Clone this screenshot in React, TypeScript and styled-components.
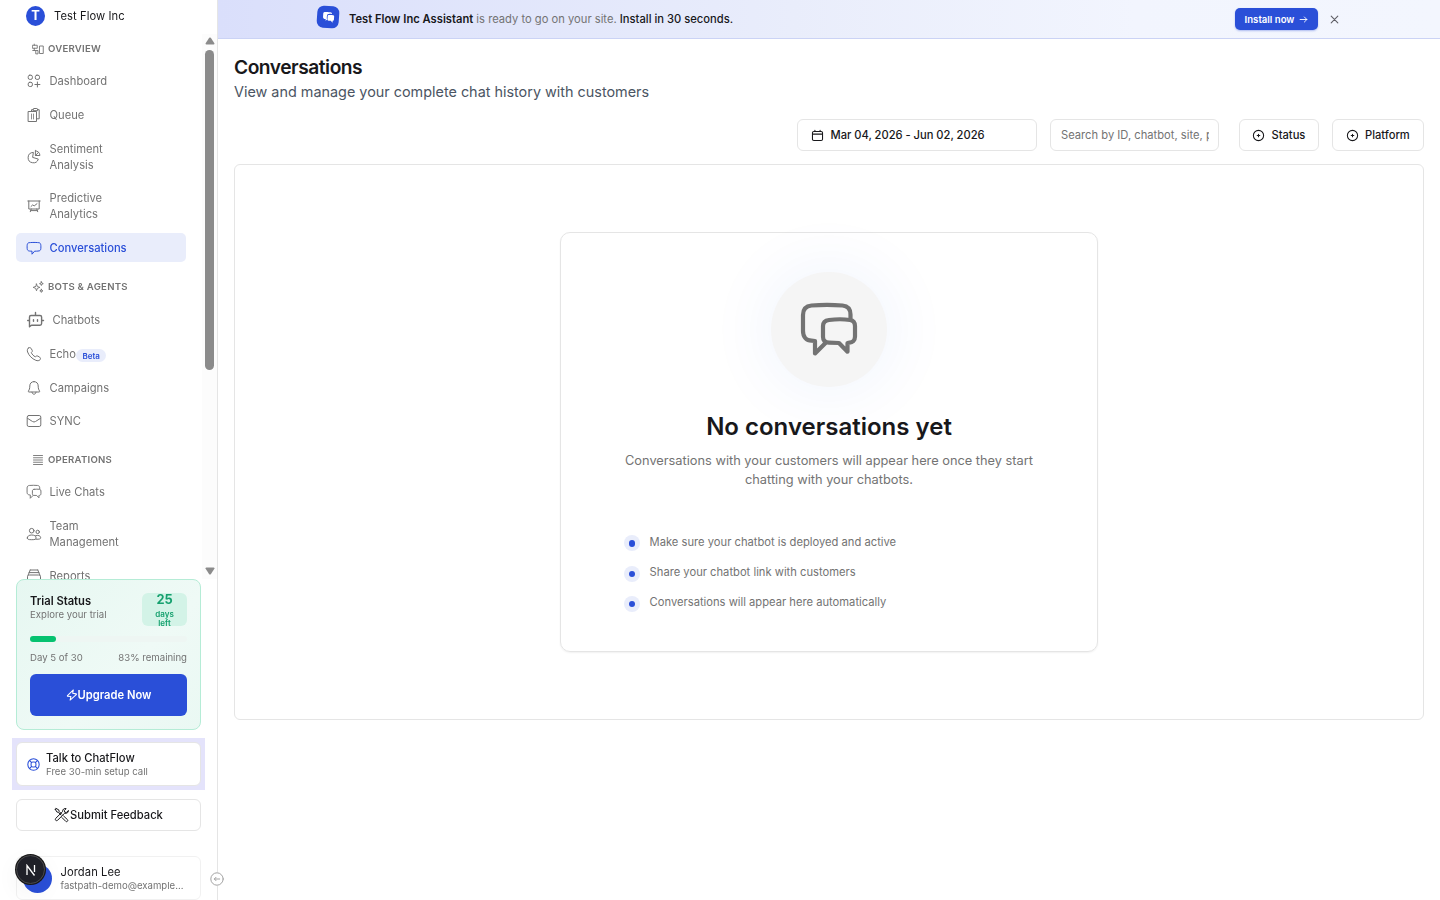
import React from "react";
import styled, { createGlobalStyle } from "styled-components";

const GlobalStyle = createGlobalStyle`
  *, *::before, *::after { box-sizing: border-box; }
  html, body { margin: 0; padding: 0; height: 100%; overflow: hidden; }
  body { background: #fff; color: #18181b; font-family: Inter, "Liberation Sans", sans-serif; font-size: 11.2px; }
  button, input { font-family: inherit; margin: 0; }
  svg { display: block; flex: none; }
`;

const Page = styled.div`
  display: flex;
  width: 1440px;
  height: 900px;
  overflow: hidden;
`;

const Sidebar = styled.aside`
  position: relative;
  display: flex;
  flex-direction: column;
  flex: none;
  width: 218px;
  height: 900px;
  border-right: 1px solid #e5e5e5;
  background: #fff;
  will-change: transform;
`;

const Brand = styled.div`
  display: flex;
  align-items: center;
  flex: none;
  gap: 9px;
  height: 34px;
  padding: 0 0 2px 26px;
  font-size: 11.2px;
  font-weight: 400;
  letter-spacing: 0.08px;
  color: #18181b;
`;

const BrandMark = styled.span`
  display: grid;
  place-items: center;
  width: 19px;
  height: 20px;
  border-radius: 50%;
  background: #2a4fd8;
  color: #fff;
  font-size: 12.8px;
  font-weight: 700;
  line-height: 18px;
`;

const NavRegion = styled.div`
  display: flex;
  flex: none;
  height: 545px;
  overflow: hidden;
`;

const Nav = styled.nav`
  flex: 1;
  padding: 5px 16px 0;
`;

const Group = styled.div<{ $top?: number }>`
  display: flex;
  align-items: center;
  height: 19.2px;
  margin-top: ${(p) => p.$top ?? 0}px;
  margin-bottom: 8.800px;
  padding-left: 16px;
  gap: 4px;
  font-size: 9.6px;
  font-weight: 600;
  letter-spacing: 0.24px;
  color: #737373;
`;

const Item = styled.a<{ $active?: boolean }>`
  display: flex;
  align-items: center;
  width: 170px;
  margin-bottom: 4.8px;
  padding: 6.4px 10px;
  gap: 7.5px;
  border-radius: 5px;
  background: ${(p) => (p.$active ? "#e9edfb" : "transparent")};
  color: ${(p) => (p.$active ? "#2a4fd8" : "#737373")};
  font-size: 11.2px;
  font-weight: ${(p) => (p.$active ? 500 : 400)};
  line-height: 16px;
`;

const ItemText = styled.span<{ $wrap?: boolean }>`
  width: ${(p) => (p.$wrap ? "80px" : "auto")};
`;

const Beta = styled.span`
  height: 13px;
  margin: 3px 0 0 -7px;
  padding: 0 6px;
  border-radius: 7px;
  background: #e9edfb;
  color: #2a4fd8;
  font-size: 8px;
  font-weight: 600;
  line-height: 14px;
`;

const ScrollTrack = styled.div`
  display: flex;
  flex-direction: column;
  align-items: center;
  width: 15px;
  padding: 3px 0 4px;
  background: #fcfcfc;
`;

const Thumb = styled.div`
  width: 9px;
  height: 320px;
  margin: 5px 0 auto;
  border-radius: 5px;
  background: #8b8b8b;
`;

const TrialCard = styled.section`
  flex: none;
  width: 185px;
  height: 151px;
  margin-left: 16px;
  padding: 12px 13px;
  border: 1px solid #b5ecd6;
  border-radius: 8px;
  background: linear-gradient(135deg, #e6f7f1, #effaf6 60%, #eaf8f3);
`;

const Between = styled.div`
  display: flex;
  justify-content: space-between;
  color: #737373;
  font-size: 9.6px;
  line-height: 12px;
`;

const TrialTitle = styled.div`
  padding-top: 2px;
  color: #18181b;
  font-size: 11.2px;
  font-weight: 600;
  line-height: 15px;
`;

const DaysLeft = styled.div`
  width: 45px;
  height: 33px;
  margin-top: 1px;
  border-radius: 6px;
  background: #d3f3e7;
  color: #15a06e;
  font-size: 8px;
  font-weight: 600;
  line-height: 9.6px;
  text-align: center;
  strong { display: block; margin-bottom: 2.500px; font-size: 12.8px; font-weight: 700; line-height: 14px; }
`;

const Progress = styled.div`
  height: 6px;
  margin: 10px 0 10px;
  border-radius: 3px;
  background: #eef6f3;
`;

const ProgressFill = styled.div`
  width: 26px;
  height: 6px;
  border-radius: 3px;
  background: #06c270;
`;

const Upgrade = styled.button`
  display: flex;
  align-items: center;
  justify-content: center;
  width: 157px;
  height: 42px;
  margin-top: 10px;
  padding: 0;
  border: 0;
  border-radius: 6px;
  background: #2a4fd8;
  color: #fff;
  font-size: 11.2px;
  font-weight: 600;
`;

const TalkCard = styled.a`
  display: flex;
  align-items: center;
  flex: none;
  width: 193px;
  height: 52px;
  margin: 8px 0 9px 12px;
  padding: 4px;
  background: #e4e3fb;
`;

const TalkInner = styled.div`
  display: flex;
  align-items: center;
  width: 185px;
  height: 44px;
  padding-left: 10px;
  gap: 6px;
  border: 1px solid #e5e5e5;
  border-radius: 6px;
  background: #fff;
`;

const TwoLines = styled.div<{ $light?: boolean }>`
  color: #18181b;
  font-size: 11.2px;
  font-weight: ${(p) => (p.$light ? 400 : 500)};
  letter-spacing: ${(p) => (p.$light ? "0.08px" : "0")};
  line-height: 14px;
  small { display: block; color: #737373; font-size: 9.6px; font-weight: 400; letter-spacing: 0; line-height: 13px; }
`;

const Feedback = styled.button`
  display: flex;
  align-items: center;
  justify-content: center;
  flex: none;
  width: 185px;
  height: 32px;
  margin: 0 0 25px 16px;
  padding: 0;
  border: 1px solid #e5e5e5;
  border-radius: 6px;
  background: #fff;
  color: #18181b;
  font-size: 11.2px;
  font-weight: 500;
`;

const UserCard = styled.div`
  display: flex;
  align-items: center;
  flex: none;
  width: 185px;
  height: 44px;
  margin-left: 16px;
  padding-left: 6px;
  gap: 8.500px;
  border: 1px solid #f1f1f1;
  border-radius: 6px;
`;

const Avatar = styled.span`
  width: 29px;
  height: 29px;
  border-radius: 50%;
  background: #2a4fd8;
`;

const DevBadge = styled.div`
  position: absolute;
  left: 16px;
  top: 855px;
  display: grid;
  place-items: center;
  width: 29px;
  height: 29px;
  border: 1px solid #4b4b4d;
  border-radius: 50%;
  background: #1f2028;
  box-shadow: 0 0 0 1px #171717, 0 8px 24px rgba(0, 0, 0, 0.06);
`;

const Collapse = styled.div`
  position: absolute;
  left: 210px;
  top: 872px;
  width: 14px;
  height: 14px;
  border-radius: 50%;
  background: #fff;
`;

const Main = styled.main`
  display: flex;
  flex-direction: column;
  flex: 1;
  min-width: 0;
`;

const Banner = styled.div`
  display: flex;
  align-items: center;
  height: 39px;
  padding: 0 101px 0 98.500px;
  border-bottom: 1px solid #cbd3f5;
  background: linear-gradient(90deg, #dadffb 0%, #e9edfb 47%, #f2f5fe 75%, #f3f6fe 100%);
`;

const BannerLogo = styled.span`
  display: grid;
  place-items: center;
  width: 22.400px;
  height: 22.400px;
  margin: -4px 10px 0 0;
  border-radius: 6.500px;
  background: #2a4fd8;
  transform: rotate(4deg);
`;

const BannerText = styled.p`
  flex: 1;
  margin: 0;
  color: #737373;
  font-size: 11.2px;
  line-height: 16px;
  b { color: #18181b; font-weight: 600; }
  em { color: #18181b; font-style: normal; font-weight: 500; }
`;

const Install = styled.button`
  display: flex;
  align-items: center;
  justify-content: center;
  width: 83px;
  height: 22px;
  margin-right: 12px;
  padding: 0;
  gap: 5px;
  border: 0;
  border-radius: 5px;
  background: #2a4fd8;
  box-shadow: 0 1px 2px rgba(42, 79, 216, 0.35);
  color: #fff;
  font-size: 9.6px;
  font-weight: 600;
`;

const Content = styled.div`
  padding: 16px 16px 0;
`;

const Title = styled.h1`
  margin: 0;
  color: #18181b;
  font-size: 19.2px;
  font-weight: 600;
  letter-spacing: -0.48px;
  line-height: 25px;
`;

const Subtitle = styled.p`
  margin: 0;
  color: #4b5563;
  font-size: 14.4px;
  line-height: 24px;
`;

const Filters = styled.div`
  display: flex;
  justify-content: flex-end;
  margin: 15px 0 13px;
  gap: 13px;
`;

const FilterButton = styled.button<{ $width: number; $pad?: number }>`
  display: flex;
  align-items: center;
  width: ${(p) => p.$width}px;
  height: 32px;
  padding: 0 0 0 ${(p) => p.$pad ?? 12}px;
  gap: 6.500px;
  border: 1px solid #e5e5e5;
  border-radius: 6px;
  background: #fff;
  color: #18181b;
  font-size: 11.2px;
  font-weight: 500;
  letter-spacing: -0.03px;
`;

const Search = styled.input`
  width: 169px;
  height: 32px;
  margin-right: 7px;
  padding: 0 9px 0 10px;
  border: 1px solid #e5e5e5;
  border-radius: 6px;
  font-size: 11.2px;
  outline: none;
  &::placeholder { color: #737373; opacity: 1; }
`;

const Panel = styled.section`
  display: flex;
  justify-content: center;
  height: 556px;
  padding-top: 67px;
  border: 1px solid #e5e5e5;
  border-radius: 6px;
`;

const EmptyCard = styled.div`
  display: flex;
  flex-direction: column;
  align-items: center;
  width: 538px;
  height: 420px;
  padding-top: 39px;
  border: 1px solid #e5e5e5;
  border-radius: 10px;
  box-shadow: 0 1px 2px rgba(0, 0, 0, 0.06);
`;

const IconDisc = styled.div`
  display: grid;
  place-items: center;
  width: 115.2px;
  height: 115.2px;
  border-radius: 50%;
  background: #f5f5f5;
  color: #737373;
  box-shadow: 0 0 64px 8px rgba(42, 79, 216, 0.06);
`;

const EmptyTitle = styled.h2`
  margin: 24px 0 0;
  color: #18181b;
  font-size: 24px;
  font-weight: 600;
  line-height: 32px;
`;

const EmptyText = styled.p`
  width: 420px;
  margin: 8px 0 0;
  color: #737373;
  font-size: 12.8px;
  line-height: 19.2px;
  text-align: center;
`;

const Steps = styled.ul`
  width: 410px;
  margin: 42px 0 0;
  padding: 0;
  list-style: none;
`;

const Step = styled.li`
  display: flex;
  height: 30.4px;
  gap: 9.6px;
  color: #737373;
  font-size: 11.2px;
  line-height: 20.600px;
`;

const Dot = styled.span`
  display: grid;
  place-items: center;
  width: 16px;
  height: 16px;
  margin-top: 3.800px;
  border-radius: 50%;
  background: #e9edfb;
  &::after { content: ""; width: 6.4px; height: 6.4px; border-radius: 50%; background: #2a4fd8; }
`;

type IconProps = { size?: number; w?: number; children: React.ReactNode };
const Icon = ({ size = 16, w = 1, children }: IconProps) => (
  <svg width={size} height={size} viewBox="0 0 16 16" fill="none" stroke="currentColor" strokeWidth={w} strokeLinecap="round" strokeLinejoin="round">
    {children}
  </svg>
);

const icons = {
  overview: (
    <Icon size={12} w={1.2}>
      <path d="M1 3h6v4H1zM3 3V1.5M1 10h4v4.5h3V10H5M3 7v3M10.5 4h4.500v10h-4.500z" />
    </Icon>
  ),
  dashboard: (
    <Icon>
      <rect x="2.200" y="2.200" width="4.200" height="4.200" rx="1.600" />
      <rect x="9.300" y="2.200" width="4.200" height="4.200" rx="1.600" />
      <rect x="2.200" y="9.300" width="4.200" height="4.200" rx="1.600" />
      <path d="M11.400 9v5M8.900 11.500h5" />
    </Icon>
  ),
  queue: (
    <Icon>
      <path d="M5.500 4V2.700h1.600M11.500 2.700h1.700v9.100h-2.700M7.200 3.300V2.100c0-.4.300-.6.600-.6h3c.4 0 .7.200.7.600v1.200zM2.500 4.500h8v10h-8z" />
      <path d="M5.500 7v5M7.500 7v5" strokeWidth=".8" />
    </Icon>
  ),
  pie: (
    <Icon>
      <path d="M7 3.400a5.200 5.200 0 1 0 5.300 6.700L7 8.500zM9.400 1.800V6.500h4.500a4.600 4.600 0 0 0-4.500-4.700zM9.400 6.500l3-3" />
    </Icon>
  ),
  board: (
    <Icon>
      <path d="M1.800 3h12.400M2.800 3v8h10.400V3M5 8.500l1.700-1.600 1.500 1L11 5.700M5.200 11l-.9 2.700M10.800 11l.9 2.700M4.800 12.600h6.400" />
    </Icon>
  ),
  chat: (
    <Icon>
      <path d="M6 13.800v-2.600c-1.800 0-3.200-.2-3.900-.6-.8-.5-1-1.500-1-3.700s.2-3.400 1.200-4c1.200-.6 10.200-.6 11.400 0 1 .6 1.200 1.800 1.200 4s-.2 3.200-1 3.700c-.8.4-2.600.6-4.900.6z" />
    </Icon>
  ),
  sparkles: (
    <Icon size={12} w={1.2}>
      <path d="M6 4l1.200 3.300L10.500 8.500 7.200 9.700 6 13 4.800 9.700 1.500 8.500l3.300-1.200zM12.500 1l.7 1.800 1.800.7-1.800.7-.7 1.800-.7-1.800-1.800-.7 1.800-.7zM12.500 11l.6 1.500 1.500.6-1.500.6-.6 1.500-.6-1.500-1.500-.6 1.500-.6z" />
    </Icon>
  ),
  bot: (
    <svg width="19" height="17" viewBox="0 0 19 17" fill="none" stroke="currentColor" strokeWidth="1.400" strokeLinecap="round" strokeLinejoin="round">
      <path d="M9.500 4.500V1.500M5 4.500h9c1 0 1.600.6 1.600 1.600v6.500c0 1-.6 1.600-1.600 1.600H5.500l-2 1.600V6.100c0-1 .5-1.600 1.500-1.600zM1.700 9.500h1.800M15.600 9.500h1.900M7.500 8.700v1.600M11.500 8.700v1.600" />
    </svg>
  ),
  phone: (
    <Icon>
      <path d="M2.300 2.100c.8-.7 2-.8 2.600.1l1.200 1.900c.4.700.3 1.500-.3 2l-.5.500c.7 1.700 2.200 3.400 4 4.200l.6-.5c.6-.5 1.300-.6 2-.2l1.900 1.200c.9.600.9 1.700.2 2.500-.9 1-2.500 1.200-4.200.5C5.900 12.700 2.900 9.500 1.600 6c-.6-1.600-.3-3.100.7-3.900z" />
    </Icon>
  ),
  bell: (
    <Icon>
      <path d="M8 1.600c-2.600 0-4.200 1.800-4.200 4.400 0 2.800-.6 3.800-1.400 5-.3.500-.1 1 .5 1h10.200c.6 0 .8-.5.500-1-.8-1.200-1.400-2.200-1.400-5 0-2.600-1.600-4.400-4.200-4.400zM6 12.200c.2 1.300 1 2 2 2s1.800-.7 2-2" />
    </Icon>
  ),
  mail: (
    <Icon>
      <rect x="1.200" y="2.500" width="13.600" height="11" rx="1.600" />
      <path d="M1.500 5.300L6.500 8.500q1.500 1 3 0l5-3.200" />
    </Icon>
  ),
  lines: (
    <Icon size={12} w={1.200}>
      <path d="M2 2h12M2 5h12M2 8h12M2 11h12M2 14h12" />
    </Icon>
  ),
  people: (
    <Icon>
      <circle cx="5.700" cy="4.700" r="2.300" />
      <circle cx="11.700" cy="5.900" r="1.700" />
      <path d="M1.300 12c0-2 1.800-3 4.400-3s4.400 1 4.400 3c0 1.300-1 1.700-4.400 1.700S1.300 13.300 1.300 12zM9.500 9.700c2.800-1 5.200.2 5.200 2 0 1.200-1.200 1.700-4.600 1.500" />
    </Icon>
  ),
  reports: (
    <Icon>
      <path d="M4.200 2h7.600M3.200 4.600h9.600M1.500 14V8.800C1.500 7.500 2.200 7 3.300 7h9.400c1.100 0 1.800.5 1.800 1.800V14zM4.200 2l-1 2.600M11.800 2l1 2.600M3.200 4.600L2 7.300M12.800 4.600L14 7.300" />
    </Icon>
  ),
  bolt: (
    <Icon size={12} w={1.400}>
      <path d="M9.800 1.300L2 8.800c-.3.400-.2.800.3.800l4.200.5-1 4.600 8.200-7.300c.4-.4.200-.8-.2-.9l-4.600-.8z" />
    </Icon>
  ),
  tools: (
    <Icon w={1}>
      <path d="M2 1.500l2.700 1.300.5 1.700 2.600 2.600M9.600 9l3.900 3.700c1 1-.7 2.700-1.700 1.700L8 10.600M1.300 2.300l1.500 2.600 1.500.5L7 8M14.300 3.900l-2 1.600-1.600-.3-.3-1.600 1.700-2c-1.700-.6-3.700.7-3.500 3l-6.900 6.800c-1.200 1.300.6 3.100 1.900 1.900l6.900-7c2.300.3 4.400-.8 3.800-2.400zM1.300 2.300l.7-.8" />
    </Icon>
  ),
};

const ChatsIcon = ({ size, width }: { size: number; width: number }) => (
  <svg width={size} height={size} viewBox="0 0 60 60" fill="none" stroke="currentColor" strokeWidth={width} strokeLinecap="round" strokeLinejoin="round">
    <path d="M51.500 18.500v-4c0-5.500-3-8.500-8-9-10-.9-21-.9-31 0-5.500.5-8.500 4-8.500 9.500v16c0 6 3.500 9.500 8.500 9.700l3.500.3v12.500L26.500 43" />
    <path d="M30 20c7-.9 15-.9 21 0 3.500.5 5 3 5 6v10.500c0 4-2.500 6-5.500 6.200l-2 .3v8.700L40 43l-10-.3c-4-.2-6-2-6-6V26c0-3.500 2-5.500 6-6z" />
  </svg>
);

const PlusCircle = () => (
  <Icon size={13} w={1.300}>
    <circle cx="8" cy="8" r="6.300" />
    <path d="M8 6.400v3.200M6.400 8h3.200" />
  </Icon>
);

const Arrow = ({ down }: { down?: boolean }) => (
  <svg width="10" height="8" viewBox="0 0 10 8" fill="#8b8b8b">
    <path d={down ? "M.5 1.500Q.5 .5 1.500.5h7q1 0 1 1L5.800 7.200q-.8.800-1.600 0z" : "M.5 6.500q0 1 1 1h7q1 0 1-1L5.800.8Q5 0 4.200.8z"} />
  </svg>
);

export default function App() {
  return (
    <>
      <GlobalStyle />
      <Page>
        <Sidebar>
          <Brand>
            <BrandMark>T</BrandMark>
            Test Flow Inc
          </Brand>
          <NavRegion>
            <Nav>
              <Group>{icons.overview}OVERVIEW</Group>
              <Item>{icons.dashboard}<ItemText>Dashboard</ItemText></Item>
              <Item>{icons.queue}<ItemText>Queue</ItemText></Item>
              <Item>{icons.pie}<ItemText $wrap>Sentiment Analysis</ItemText></Item>
              <Item>{icons.board}<ItemText $wrap>Predictive Analytics</ItemText></Item>
              <Item $active>{icons.chat}<ItemText>Conversations</ItemText></Item>
              <Group $top={15}>{icons.sparkles}BOTS &amp; AGENTS</Group>
              <Item>{icons.bot}<ItemText>Chatbots</ItemText></Item>
              <Item>{icons.phone}<ItemText>Echo</ItemText><Beta>Beta</Beta></Item>
              <Item>{icons.bell}<ItemText>Campaigns</ItemText></Item>
              <Item>{icons.mail}<ItemText>SYNC</ItemText></Item>
              <Group $top={14.4}>{icons.lines}OPERATIONS</Group>
              <Item><ChatsIcon size={16} width={3.600} /><ItemText>Live Chats</ItemText></Item>
              <Item>{icons.people}<ItemText $wrap>Team Management</ItemText></Item>
              <Item>{icons.reports}<ItemText>Reports</ItemText></Item>
            </Nav>
            <ScrollTrack>
              <Arrow />
              <Thumb />
              <Arrow down />
            </ScrollTrack>
          </NavRegion>

          <TrialCard>
            <Between>
              <div>
                <TrialTitle>Trial Status</TrialTitle>
                Explore your trial
              </div>
              <DaysLeft><strong>25</strong>days<br />left</DaysLeft>
            </Between>
            <Progress><ProgressFill /></Progress>
            <Between><span>Day 5 of 30</span><span>83% remaining</span></Between>
            <Upgrade>{icons.bolt}Upgrade Now</Upgrade>
          </TrialCard>

          <TalkCard>
            <TalkInner>
              <svg width="13" height="13" viewBox="0 0 16 16" fill="none" stroke="#2a4fd8" strokeWidth="1.300">
                <circle cx="8" cy="8" r="7" />
                <rect x="5" y="5" width="6" height="6" rx="2.200" />
                <path d="M3 3l3 3M13 3l-3 3M3 13l3-3M13 13l-3-3" />
              </svg>
              <TwoLines>Talk to ChatFlow<small>Free 30-min setup call</small></TwoLines>
            </TalkInner>
          </TalkCard>
          <Feedback>{icons.tools}Submit Feedback</Feedback>
          <UserCard>
            <Avatar />
            <TwoLines $light>Jordan Lee<small>fastpath-demo@example...</small></TwoLines>
          </UserCard>
          <DevBadge>
            <svg width="12" height="12" viewBox="0 0 12 12" fill="none" stroke="#fff" strokeWidth="1.300">
              <path d="M2 11V1.500L9.500 11.500M9.500 1v7" />
            </svg>
          </DevBadge>
          <Collapse>
            <svg width="14" height="14" viewBox="0 0 14 14" fill="none" stroke="#a3a3a3" strokeLinecap="round">
              <circle cx="7" cy="7" r="6.200" />
              <path d="M4.300 7h5.400M6 5.300L4.300 7 6 8.700" />
            </svg>
          </Collapse>
        </Sidebar>

        <Main>
          <Banner>
            <BannerLogo>
              <svg width="13" height="13" viewBox="0 0 13 13" fill="#fff">
                <path d="M2.200 1.300C4 .9 7 .9 8.800 1.300c.7.200 1 .7 1 1.500-3.500-.3-5 .2-5 2.700 0 1.500 0 2.300.6 3L3.800 10V8.200C2 8.200 1 7.700 1 6V3c0-1 .4-1.500 1.200-1.700z" />
                <path d="M6.500 3.900c1.500-.2 3.200-.2 4.700 0 .6.100.9.500.9 1.200v3c0 .9-.4 1.300-1.200 1.400v2L9 9.600H6.800c-.8-.1-1.200-.5-1.200-1.300V5c0-.7.300-1 .9-1.100z" />
              </svg>
            </BannerLogo>
            <BannerText>
              <b>Test Flow Inc Assistant</b> is ready to go on your site. <em>Install in 30 seconds.</em>
            </BannerText>
            <Install>
              Install now
              <Icon size={9} w={1.600}><path d="M2 8h12M9.500 3.500L14 8l-4.500 4.500" /></Icon>
            </Install>
            <svg width="9" height="9" viewBox="0 0 9 9" stroke="#5f5f66" strokeWidth="1.100" strokeLinecap="round">
              <path d="M1.200 1.200l6.600 6.600M7.800 1.200L1.200 7.800" />
            </svg>
          </Banner>

          <Content>
            <Title>Conversations</Title>
            <Subtitle>View and manage your complete chat history with customers</Subtitle>
            <Filters>
              <FilterButton $width={240} $pad={13}>
                <Icon size={13} w={1.300}>
                  <path d="M3.500 3h9c1 0 1.700.6 1.700 1.600v8c0 1-.7 1.600-1.700 1.600h-9c-1 0-1.700-.6-1.700-1.600v-8C1.800 3.600 2.500 3 3.500 3zM1.800 6.300h12.400M4.800 1.500V3M11.200 1.500V3" />
                </Icon>
                Mar 04, 2026 - Jun 02, 2026
              </FilterButton>
              <Search placeholder="Search by ID, chatbot, site, page" />
              <FilterButton $width={80}><PlusCircle />Status</FilterButton>
              <FilterButton $width={92} $pad={12.5}><PlusCircle />Platform</FilterButton>
            </Filters>
            <Panel>
              <EmptyCard>
                <IconDisc><ChatsIcon size={60} width={4.200} /></IconDisc>
                <EmptyTitle>No conversations yet</EmptyTitle>
                <EmptyText>Conversations with your customers will appear here once they start chatting with your chatbots.</EmptyText>
                <Steps>
                  <Step><Dot />Make sure your chatbot is deployed and active</Step>
                  <Step><Dot />Share your chatbot link with customers</Step>
                  <Step><Dot />Conversations will appear here automatically</Step>
                </Steps>
              </EmptyCard>
            </Panel>
          </Content>
        </Main>
      </Page>
    </>
  );
}
